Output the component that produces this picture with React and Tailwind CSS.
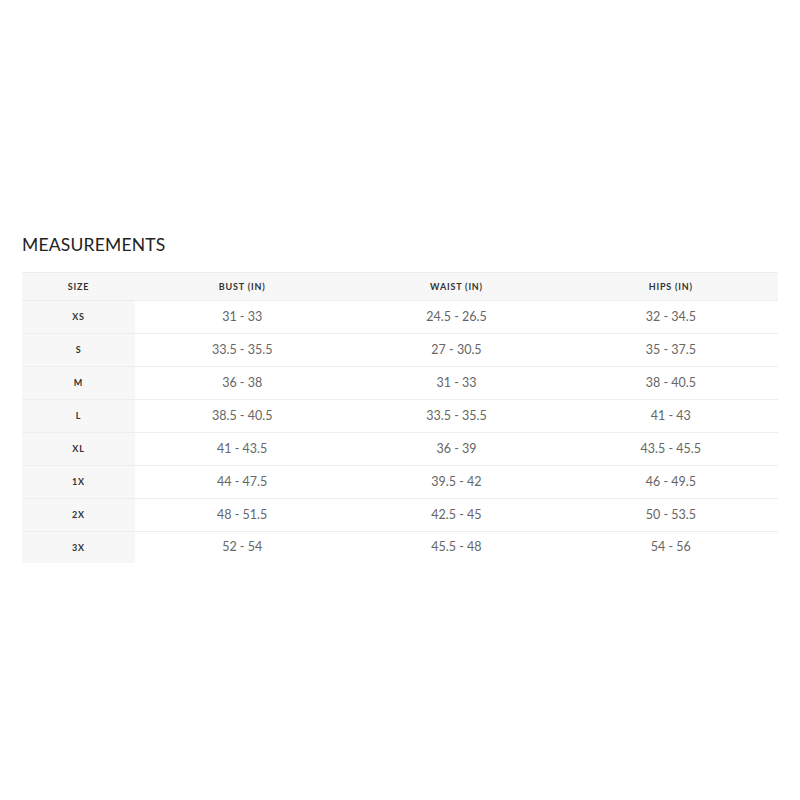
const rows = [
  ["XS", "31 - 33", "24.5 - 26.5", "32 - 34.5"],
  ["S", "33.5 - 35.5", "27 - 30.5", "35 - 37.5"],
  ["M", "36 - 38", "31 - 33", "38 - 40.5"],
  ["L", "38.5 - 40.5", "33.5 - 35.5", "41 - 43"],
  ["XL", "41 - 43.5", "36 - 39", "43.5 - 45.5"],
  ["1X", "44 - 47.5", "39.5 - 42", "46 - 49.5"],
  ["2X", "48 - 51.5", "42.5 - 45", "50 - 53.5"],
  ["3X", "52 - 54", "45.5 - 48", "54 - 56"],
]

const App = () => {
  return (
    <div className="w-[800px] h-[800px] bg-white pt-[232px] px-[22px] font-['Lato',sans-serif]">
      <h2 className="text-[17.5px] leading-[26px] tracking-[0.2px] text-[#222] h-[40px]">MEASUREMENTS</h2>
      <div className="w-[756px]">
        <div className="grid grid-cols-[113px_1fr_1fr_1fr] h-[29px] items-center bg-[#f7f7f7] border-t border-b border-[#ececec] text-[9px] font-bold tracking-[0.8px] text-[#333]">
          <div className="text-center">SIZE</div>
          <div className="text-center">BUST (IN)</div>
          <div className="text-center">WAIST (IN)</div>
          <div className="text-center">HIPS (IN)</div>
        </div>
        {rows.map((r, i) => (
          <div
            key={i}
            className={`grid grid-cols-[113px_1fr_1fr_1fr] ${i < rows.length - 1 ? "h-[33px] border-b border-[#ededed]" : "h-[31px]"}`}
          >
            <div className="bg-[#f7f7f7] flex items-center justify-center text-[9px] font-bold tracking-[0.8px] text-[#333]">
              {r[0]}
            </div>
            {r.slice(1).map((v, j) => (
              <div key={j} className="flex items-center justify-center text-[12.5px] text-[#666]">
                {v}
              </div>
            ))}
          </div>
        ))}
      </div>
    </div>
  )
}

export default App
